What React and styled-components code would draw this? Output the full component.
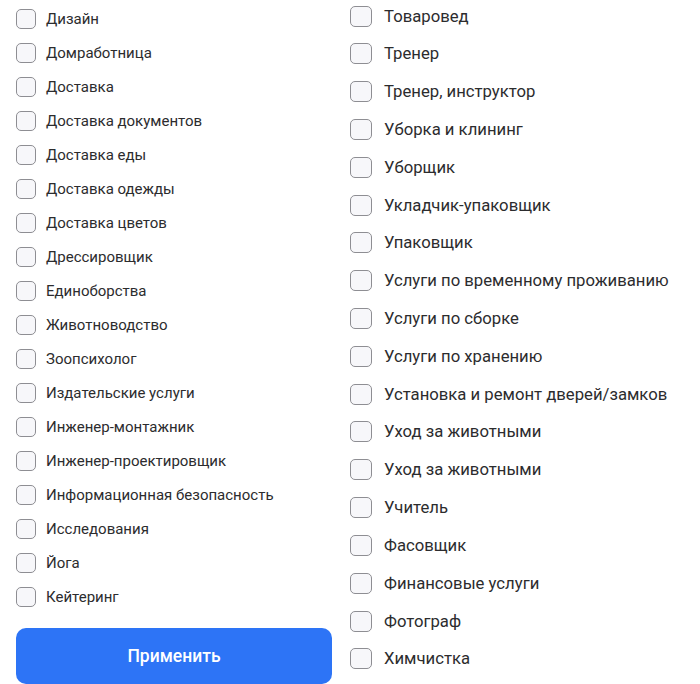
import React from "react";
import styled, { createGlobalStyle } from "styled-components";

const Global = createGlobalStyle`
  html, body { margin: 0; padding: 0; background: #fff; }
  body { font-family: Roboto, "Noto Sans", Arial, sans-serif; color: #222; overflow: hidden; }
`;

const Page = styled.div`
  display: flex;
  width: 700px;
  height: 684px;
  overflow: hidden;
`;

const LeftCol = styled.div`
  width: 324px;
  padding: 9px 0 0 16px;
  display: flex;
  flex-direction: column;
`;

const RightCol = styled.div`
  padding: 5px 0 0 10px;
  display: flex;
  flex-direction: column;
`;

const List = styled.div`
  display: flex;
  flex-direction: column;
  gap: ${(p) => p.$gap}px;
`;

const Row = styled.label`
  display: flex;
  align-items: center;
  height: ${(p) => p.$box}px;
  gap: ${(p) => p.$textGap}px;
  font-size: ${(p) => p.$font}px;
  color: #2c2c2e;
  white-space: nowrap;
`;

const Box = styled.span`
  flex: none;
  box-sizing: border-box;
  width: ${(p) => p.$w}px;
  height: ${(p) => p.$h}px;
  border: 1.2px solid #8e8e93;
  border-radius: 5px;
  background: #f7f7fa;
`;

const Button = styled.button`
  margin-top: 21px;
  width: 316px;
  height: 56px;
  flex: none;
  border: none;
  border-radius: 10px;
  background: #2d74f6;
  color: #fff;
  font-family: Roboto, "Noto Sans", Arial, sans-serif;
  font-size: 17.5px;
  font-weight: 500;
`;

const left = [
  "Дизайн",
  "Домработница",
  "Доставка",
  "Доставка документов",
  "Доставка еды",
  "Доставка одежды",
  "Доставка цветов",
  "Дрессировщик",
  "Единоборства",
  "Животноводство",
  "Зоопсихолог",
  "Издательские услуги",
  "Инженер-монтажник",
  "Инженер-проектировщик",
  "Информационная безопасность",
  "Исследования",
  "Йога",
  "Кейтеринг",
];

const right = [
  "Товаровед",
  "Тренер",
  "Тренер, инструктор",
  "Уборка и клининг",
  "Уборщик",
  "Укладчик-упаковщик",
  "Упаковщик",
  "Услуги по временному проживанию",
  "Услуги по сборке",
  "Услуги по хранению",
  "Установка и ремонт дверей/замков",
  "Уход за животными",
  "Уход за животными",
  "Учитель",
  "Фасовщик",
  "Финансовые услуги",
  "Фотограф",
  "Химчистка",
];

export default function App() {
  return (
    <Page>
      <Global />
      <LeftCol>
        <List $gap={14}>
          {left.map((t, i) => (
            <Row key={i} $box={20} $textGap={10} $font={15}>
              <Box $w={20} $h={20} />
              {t}
            </Row>
          ))}
        </List>
        <Button>Применить</Button>
      </LeftCol>
      <RightCol>
        <List $gap={15.82}>
          {right.map((t, i) => (
            <Row key={i} $box={22} $textGap={12} $font={16.7}>
              <Box $w={22} $h={21} />
              {t}
            </Row>
          ))}
        </List>
      </RightCol>
    </Page>
  );
}
